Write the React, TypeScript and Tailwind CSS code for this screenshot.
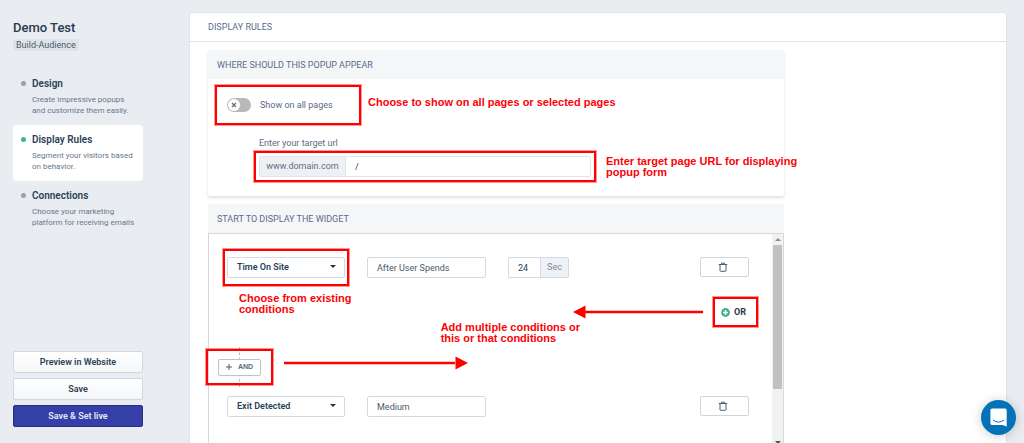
import { useState } from 'react';
import type { ReactNode } from 'react';

const steps = [
  { titulo: 'Design', lines: ['Create impressive popups', 'and customize them easily.'] },
  { titulo: 'Display Rules', lines: ['Segment your visitors based', 'on behavior.'] },
  { titulo: 'Connections', lines: ['Choose your marketing', 'platform for receiving emails'] },
];

const fieldClass = 'h-[21px] rounded-xs border border-[#d3dae4] bg-white px-[9px] text-[9px] text-[#4b5a6b] focus:outline-none';
const headingClass = 'bg-[#f5f6f8] px-[9px] pt-[2px] text-[9px] leading-[27px] text-[#5a6b8c]';

function Highlight({ className }: { className: string }) {
  return <span className={`pointer-events-none absolute border-2 border-[#ff0000] ring-1 ring-[#ff0000]/40 ${className}`} />;
}

function Note({ className, children }: { className: string; children: ReactNode }) {
  return (
    <p className={`pointer-events-none absolute whitespace-nowrap font-['Liberation_Sans',sans-serif] font-bold text-[11px] leading-[11px] text-[#fb0207] ${className}`}>
      {children}
    </p>
  );
}

function Sidebar() {
  const [active, setActive] = useState('Display Rules');

  return (
    <aside className="flex w-[190px] shrink-0 flex-col pt-5 pr-[47px] pb-4 pl-[13px]">
      <h1 className="text-[13px] leading-4 font-medium text-[#2b3a4a]">Demo Test</h1>
      <span className="mt-[3px] self-start rounded-xs bg-[#dfe3e8] px-[3px] text-[9px] leading-3 text-[#4b5a6b]">Build-Audience</span>

      <nav className="mt-[18px]">
        {steps.map((step) => (
          <button
            key={step.titulo}
            type="button"
            onClick={() => setActive(step.titulo)}
            className={`flex h-14 w-full gap-1.5 rounded-sm pt-2 pl-2 text-left ${active === step.titulo ? 'bg-white' : ''}`}
          >
            <span className={`mt-1 size-[5px] shrink-0 rounded-full ${active === step.titulo ? 'bg-[#3fb984]' : 'bg-[#93a1b0]'}`} />
            <span className="whitespace-nowrap">
              <span className="block text-[10px] leading-[14px] font-semibold text-[#2c4257]">{step.titulo}</span>
              <span className="mt-[3px] block text-[8px] leading-[11px] text-[#66788a]">
                {step.lines[0]}
                <br />
                {step.lines[1]}
              </span>
            </span>
          </button>
        ))}
      </nav>

      <div className="mt-auto flex flex-col gap-[5px] text-[9px] font-semibold text-[#2c4257]">
        <button type="button" className="h-[22px] rounded-xs border border-[#d0d8e0] bg-linear-to-b from-white to-[#f4f6f8] pt-px">Preview in Website</button>
        <button type="button" className="h-[22px] rounded-xs border border-[#d0d8e0] bg-linear-to-b from-white to-[#f4f6f8] pt-px">Save</button>
        <button type="button" className="h-[22px] rounded-xs border border-[#26307f] bg-[#343fa8] pt-px text-[#e6e8f8]">Save &amp; Set live</button>
      </div>
    </aside>
  );
}

function TargetCard() {
  const [allPages, setAllPages] = useState(false);
  const [url, setUrl] = useState('/');

  return (
    <section className="relative rounded-xs bg-white shadow-[0_2px_3px_rgba(60,70,90,0.16)]">
      <h3 className={headingClass}>WHERE SHOULD THIS POPUP APPEAR</h3>
      <div className="px-[19px] pt-[14px] pb-[19px]">
        <div className="relative flex h-6 items-center">
          <label htmlFor="all-pages" className="flex items-center gap-[9px] text-[9px] text-[#5a6b80]">
            <span className="relative flex">
              <input
                id="all-pages"
                type="checkbox"
                checked={allPages}
                onChange={(e) => setAllPages(e.target.checked)}
                className="h-[14px] w-6 appearance-none rounded-full bg-[#b9b9b9] checked:bg-[#3fb984]"
              />
              <span className={`pointer-events-none absolute top-px flex size-3 items-center justify-center rounded-full bg-white ${allPages ? 'right-px' : 'left-px'}`}>
                <svg viewBox="0 0 6 6" className="size-[6px]" stroke="#5c6f80" strokeWidth="1.2">
                  <path d="M1 1l4 4M5 1L1 5" />
                </svg>
              </span>
            </span>
            <span className="pt-px">Show on all pages</span>
          </label>
          <Highlight className="-top-2 -bottom-2 -left-3 w-[146px]" />
          <Note className="top-1 left-[141px]">Choose to show on all pages or selected pages</Note>
        </div>

        <div className="mt-[18px] ml-8">
          <label htmlFor="target-url" className="block text-[9px] leading-4 text-[#5a6b80]">Enter your target url</label>
          <div className="relative mt-[5px] flex w-[332px] text-[9px]">
            <span className="flex h-[21px] w-[87px] items-center justify-center rounded-l-xs border border-[#dfe4ea] bg-[#eef0f3] pt-px text-[#5f6f7f]">www.domain.com</span>
            <input
              id="target-url"
              value={url}
              onChange={(e) => setUrl(e.target.value)}
              className="h-[21px] min-w-0 flex-1 rounded-r-xs border border-l-0 border-[#dfe4ea] px-[9px] text-[#2c4257] focus:outline-none"
            />
            <Highlight className="-inset-x-[5px] -inset-y-[5px]" />
            <Note className="top-0 left-[347px]">
              Enter target page URL for displaying
              <br />
              popup form
            </Note>
          </div>
        </div>
      </div>
    </section>
  );
}

function ConditionSelect({ label, options }: { label: string; options: string[] }) {
  return (
    <div className="relative w-[118px]">
      <select aria-label={label} className={`block w-full appearance-none pt-px font-semibold text-[#1f3f57]! ${fieldClass}`}>
        {options.map((option) => (
          <option key={option}>{option}</option>
        ))}
      </select>
      <span className="pointer-events-none absolute top-2 right-[9px] border-x-[3px] border-t-[3px] border-x-transparent border-t-[#1f3344]" />
    </div>
  );
}

function TrashButton() {
  return (
    <button type="button" aria-label="Delete condition" className="ml-auto flex h-5 w-[49px] items-center justify-center rounded-xs border border-[#cdd6e0] pr-1">
      <svg viewBox="0 0 10 10" className="size-[10px]" fill="none" stroke="#4b5f72" strokeLinecap="round" strokeLinejoin="round">
        <path d="M1.200 2.500h7.600M3.500 2.300V1.200h3v1.100M2 2.700V8.600q0 .7.7.7h4.600q.7 0 .7-.7V2.700" />
      </svg>
    </button>
  );
}

function Conditions() {
  const [seconds, setSeconds] = useState('24');

  return (
    <div className="relative flex h-[280px] border border-[#d5d8dd]">
      <div className="flex-1 pt-[23px] pr-[23px] pl-[18px]">
        <div className="flex items-start">
          <div className="relative">
            <ConditionSelect label="Condition" options={['Time On Site', 'Exit Detected']} />
            <Highlight className="-inset-x-1 -inset-y-2" />
            <Note className="top-9 left-3">
              Choose from existing
              <br />
              conditions
            </Note>
          </div>
          <input aria-label="Trigger" defaultValue="After User Spends" className={`ml-[22px] w-[119px] ${fieldClass}`} />
          <div className="ml-[22px] flex">
            <input
              aria-label="Seconds"
              value={seconds}
              onChange={(e) => setSeconds(e.target.value)}
              className={`w-8 rounded-r-none! border-r-0! text-[#2c4257]! ${fieldClass}`}
            />
            <span className="flex h-[21px] w-[29px] items-center justify-center rounded-r-xs border border-[#d3dae4] bg-[#eef1f5] pt-px text-[9px] text-[#7d8a98]">Sec</span>
          </div>
          <TrashButton />
        </div>

        <div className="mt-[26px] flex justify-end pr-[3px]">
          <div className="relative">
            <button type="button" className="flex h-4 items-center gap-1 text-[9px] font-bold text-[#2b3a4a]">
              <svg viewBox="0 0 10 10" className="size-[9px]" fill="none">
                <circle cx="5" cy="5" r="4.9" fill="#3fae8c" />
                <path d="M5 2.200v5.600M2.200 5h5.600" stroke="#fff" strokeWidth="1.6" />
              </svg>
              <span className="pt-px">OR</span>
            </button>
            <Highlight className="-inset-y-[7px] -right-3 -left-2" />
            <svg viewBox="0 0 130 14" className="absolute top-px right-[43px] h-[14px] w-[130px]" fill="#ff0000">
              <path d="M0 7L12.500 .5v13zM12 5.800h118v2.500H12z" />
            </svg>
            <Note className="top-[18px] right-[166px]">
              Add multiple conditions or
              <br />
              this or that conditions
            </Note>
          </div>
        </div>

        <div className="relative mt-[27px] -ml-[9px] flex h-10 w-[43px] items-center">
          <span className="absolute inset-y-0 left-[21px] border-l border-dashed border-[#b9c0c8]" />
          <button type="button" className="relative flex h-[17px] w-full items-center justify-center gap-1.5 rounded-xs border border-[#bcc3cc] bg-white font-['Liberation_Sans',sans-serif] text-[7px] font-bold text-[#5c6874]">
            <svg viewBox="0 0 6 6" className="size-[6px]" stroke="#4b5a6b">
              <path d="M3 0v6M0 3h6" />
            </svg>
            AND
          </button>
          <Highlight className="-inset-x-3 inset-y-[2px]" />
          <svg viewBox="0 0 184 14" className="absolute top-[9px] left-[66px] h-[14px] w-[184px] max-w-none" fill="#ff0000">
            <path d="M184 7L171.500 .5v13zM0 5.800h172v2.500H0z" />
          </svg>
        </div>

        <div className="mt-[9px] flex items-start">
          <ConditionSelect label="Second condition" options={['Exit Detected', 'Time On Site']} />
          <input aria-label="Sensitivity" defaultValue="Medium" className={`ml-[22px] w-[119px] ${fieldClass}`} />
          <TrashButton />
        </div>
      </div>

      <div className="flex h-[210px] w-[11px] flex-col items-center bg-[#f1f1f1]">
        <span className="mt-1 border-x-[3px] border-b-[3px] border-x-transparent border-b-[#8a8a8a]" />
        <span className="mt-1 h-[144px] w-[9px] bg-[#c1c1c1]" />
        <span className="mt-auto border-x-[3px] border-t-[3px] border-x-transparent border-t-[#505050]" />
      </div>
    </div>
  );
}

export default function App() {
  return (
    <div className="flex h-screen overflow-hidden bg-[#e9edf2] font-['Roboto','Noto_Sans',sans-serif]">
      <Sidebar />
      <main className="mt-[13px] mr-[18px] min-w-0 flex-1 rounded-t-xs bg-white shadow-[0_0_2px_rgba(60,70,90,0.15)]">
        <h2 className="border-b border-[#dfe2e6] px-[18px] text-[9px] leading-7 text-[#5a6b8c]">DISPLAY RULES</h2>
        <div className="max-w-[612px] px-[18px] pt-2">
          <TargetCard />
          <section className="mt-2">
            <h3 className={headingClass}>START TO DISPLAY THE WIDGET</h3>
            <Conditions />
          </section>
        </div>
      </main>
      <button type="button" aria-label="Open chat" className="fixed right-2 bottom-2 flex size-[35px] items-center justify-center rounded-full bg-[#0372b8] shadow-[0_1px_12px_rgba(0,0,0,0.2)]">
        <svg viewBox="0 0 18 19" className="h-[19px] w-[18px]">
          <path d="M2 .5h13a1.700 1.700 0 0 1 1.700 1.700v16.300L12.500 17H2A1.700 1.700 0 0 1 .4 15.300V2.200A1.700 1.700 0 0 1 2 .5z" fill="#fff" />
          <path d="M3.300 12.200q5.200 4.100 10.500 0" fill="none" stroke="#0372b8" strokeLinecap="round" />
        </svg>
      </button>
    </div>
  );
}
